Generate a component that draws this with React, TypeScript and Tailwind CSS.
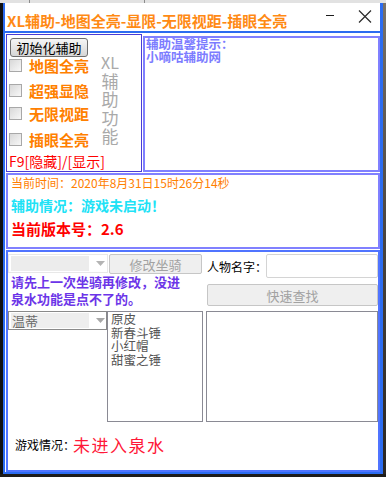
const checks = ['地图全亮', '超强显隐', '无限视距', '插眼全亮'];
const checkGaps = ['mt-[2px]', 'mt-[12px]', 'mt-[10px]', 'mt-[13px]'];
const skins = ['原皮', '新春斗锤', '小红帽', '甜蜜之锤'];

function DisabledButton({ label, className }: { label: string; className: string }) {
  return (
    <div
      className={`flex items-center justify-center rounded-[2px] border border-[#c6c6c6] bg-[#efefef] text-[13px] leading-[13px] text-[#a2a2a2] ${className}`}
    >
      {label}
    </div>
  );
}

function Arrow({ color }: { color: string }) {
  return (
    <svg width="9" height="5" viewBox="0 0 9 5" className="shrink-0">
      <path d="M0 0 L9 0 L4.5 5 Z" fill={color} />
    </svg>
  );
}

export default function App() {
  return (
    <div className="w-[386px] h-[477px] overflow-hidden bg-[#151515] font-['Noto_Sans_CJK_SC','Liberation_Sans',sans-serif]">
      <div className="flex h-[3px] bg-[#e2e2e2]">
        <div className="w-[30px] border-r border-[#8c8c8c]" />
        <div className="w-[115px] border-r border-[#8c8c8c]" />
      </div>

      <div className="flex">
        <div className="w-[3px] bg-[#101010]" />
        <div className="flex h-[471px] w-[380px] flex-col border-b-2 border-l-2 border-r-[3px] border-[#2c6cf0] bg-white">
          {/* title bar */}
          <div className="flex h-[28px] items-center">
            <span className="mt-[6px] pl-[2px] text-[15px] font-bold leading-[15px] text-[#ff8a14] whitespace-nowrap">
              XL辅助-地图全亮-显限-无限视距-插眼全亮
            </span>
            <div className="flex-1" />
            <div className="mb-[3px] h-[1.5px] w-[8px] bg-[#1c1c1c]" />
            <svg width="14" height="13" viewBox="0 0 14 13" className="mb-[2px] ml-[24px] mr-[8px]">
              <path d="M1 0.5 L13 12.5 M13 0.5 L1 12.5" stroke="#2a2a2a" strokeWidth="1.2" />
            </svg>
          </div>
          <div className="h-[2px] bg-[#2c6cf0]" />

          <div className="flex flex-1 flex-col gap-[1px] pl-[1px] pt-[1px]">
            {/* top row */}
            <div className="flex h-[138px] gap-[1px]">
              <div className="flex w-[136px] flex-col border border-[#4a3cd6]">
                <div className="flex">
                  <div className="flex w-[93px] flex-col">
                    <div className="ml-[3px] mt-[3px] flex h-[19px] w-[78px] items-center justify-center rounded-[3px] border border-[#6e6e6e] bg-gradient-to-b from-[#f6f6f6] to-[#d6d6d6] text-[13px] leading-[13px] text-black">
                      初始化辅助
                    </div>
                    {checks.map((c, i) => (
                      <div key={c} className={`ml-[2px] flex h-[13px] items-center gap-[7px] ${checkGaps[i]}`}>
                        <div className="h-[13px] w-[13px] shrink-0 border border-[#a8a8a8] bg-gradient-to-br from-[#d8d8d8] to-[#f8f8f8]" />
                        <span className="whitespace-nowrap text-[15px] font-bold leading-[15px] text-[#ff8000]">{c}</span>
                      </div>
                    ))}
                    <div className="ml-[2px] mt-[8px] whitespace-nowrap text-[14px] leading-[14px] text-[#ff0000]">
                      F9[隐藏]/[显示]
                    </div>
                  </div>
                  <div className="mt-[18px] flex w-[20px] flex-col items-center text-[17px] leading-[18.5px] text-[#a9a9a9]">
                    <span className="text-[16px]">XL</span>
                    <span>辅</span>
                    <span>助</span>
                    <span>功</span>
                    <span>能</span>
                  </div>
                </div>
              </div>

              <div className="mt-[2px] flex-1 border-2 border-[#8080ff] pl-[1px]">
                <div className="-mt-[1px] text-[12.5px] font-bold leading-[13px] text-[#7c7cff]">
                  <div>辅助温馨提示：</div>
                  <div>小嘀咕辅助网</div>
                </div>
              </div>
            </div>

            {/* status panel */}
            <div className="flex h-[76px] flex-col border-2 border-[#8080ff] pl-[3px]">
              <div className="text-[12px] leading-[16px] text-[#ff8000] whitespace-nowrap">当前时间：2020年8月31日15时26分14秒</div>
              <div className="mt-[6px] text-[14px] font-bold leading-[16px] text-[#20e2f6]">辅助情况：游戏未启动！</div>
              <div className="mt-[7px] text-[15px] font-bold leading-[18px] text-[#ff0000]">当前版本号：2.6</div>
            </div>

            {/* main panel */}
            <div className="flex flex-1 flex-col border-2 border-[#5074ff] pt-[2px]">
              <div className="flex h-[57px]">
                <div className="flex w-[198px] flex-col">
                  <div className="flex">
                    <div className="flex h-[19px] w-[100px] items-center border border-[#e8e8e8] pl-[2px]">
                      <div className="h-[15px] w-[78px] bg-[#ececec]" />
                      <div className="ml-[7px]">
                        <Arrow color="#b4b4b4" />
                      </div>
                    </div>
                    <DisabledButton label="修改坐骑" className="ml-[1px] h-[20px] w-[93px]" />
                  </div>
                  <div className="pl-[3px] text-[13px] font-bold leading-[16.5px] text-[#6c35e8]">
                    <div className="whitespace-nowrap">请先上一次坐骑再修改，没进</div>
                    <div>泉水功能是点不了的。</div>
                  </div>
                </div>
                <div className="flex flex-1 flex-col">
                  <div className="flex h-[24px] items-center">
                    <span className="ml-[1px] mt-[2px] w-[59px] whitespace-nowrap text-[12px] leading-[12px] text-black">人物名字：</span>
                    <div className="h-[24px] flex-1 rounded-[2px] border border-[#d4d4d4] bg-white" />
                  </div>
                  <DisabledButton label="快速查找" className="ml-[1px] mt-[6px] h-[22px]" />
                </div>
              </div>

              <div className="flex h-[111px]">
                <div className="flex h-[19px] w-[99px] items-center border border-[#8a8a8a] pl-[2px]">
                  <div className="h-[15px] w-[78px] bg-[#eeeeee] pl-[1px] text-[13px] leading-[15px] text-[#6a6a6a]">温蒂</div>
                  <div className="ml-[7px]">
                    <Arrow color="#a8a8a8" />
                  </div>
                </div>
                <div className="w-[96px] border border-[#8a8a94] pl-[3px] text-[12.5px] leading-[13.5px] text-[#555555]">
                  {skins.map((s) => (
                    <div key={s}>{s}</div>
                  ))}
                </div>
                <div className="ml-[3px] flex-1 border border-[#8a8a94]" />
              </div>

              <div className="mt-[14px] flex h-[18px] items-center pl-[7px]">
                <span className="w-[58px] whitespace-nowrap text-[12px] leading-[12px] text-black">游戏情况：</span>
                <span className="text-[17px] leading-[18px] tracking-[1.5px] text-[#ff1838]">未进入泉水</span>
              </div>
            </div>
          </div>
        </div>
        <div className="h-[471px] flex-1 bg-gradient-to-b from-[#7a7268] via-[#4a443e] to-[#2a2622]" />
      </div>
      <div className="h-[3px] bg-[#1e1c1a]" />
    </div>
  );
}
